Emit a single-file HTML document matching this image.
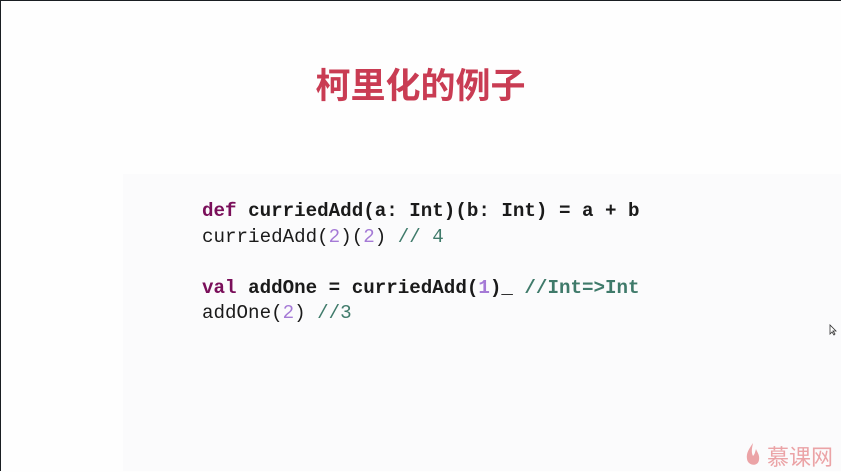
<!DOCTYPE html>
<html><head><meta charset="utf-8"><style>
html,body{margin:0;padding:0;}
body{width:841px;height:471px;overflow:hidden;background:#fefefe;position:relative;font-family:"Liberation Sans","Noto Sans CJK SC",sans-serif;}
.tb{position:absolute;left:0;top:0;width:841px;height:1px;background:#1a1e22;}
.lb{position:absolute;left:0;top:0;width:1px;height:471px;background:#1a1e22;}
.box{position:absolute;left:123px;top:174px;width:718px;height:297px;background:#fbfbfc;}
h1{position:absolute;left:0;width:841px;top:62px;margin:0;text-align:center;font-size:35px;font-weight:bold;color:#c93c53;font-family:"Noto Sans CJK SC",sans-serif;line-height:44px;}
pre{position:absolute;left:202px;top:199px;margin:0;font-family:"Liberation Mono",monospace;font-size:19.2px;line-height:25.5px;color:#1a1a1a;}
.k{color:#7a0f5a;font-weight:bold}.b{font-weight:bold}.n{color:#a57ad6}.c{color:#3f7a6a}.cb{color:#3f7a6a;font-weight:bold}
.logo{position:absolute;left:767px;top:444px;font-size:22px;color:#eba3a6;font-family:"Noto Sans CJK SC",sans-serif;line-height:24px;}
</style></head><body>
<div class="tb"></div><div class="lb"></div>
<div class="box"></div>
<h1>柯里化的例子</h1>
<pre><span class="k">def</span> <span class="b">curriedAdd(a: Int)(b: Int) = a + b</span>
curriedAdd(<span class="n">2</span>)(<span class="n">2</span>) <span class="c">// 4</span>

<span class="k">val</span> <span class="b">addOne = curriedAdd(<span class="n">1</span>)_</span> <span class="cb">//Int=&gt;Int</span>
addOne(<span class="n">2</span>) <span class="c">//3</span></pre>
<svg style="position:absolute;left:829px;top:324px" width="8" height="12"><path d="M1 1 L1 10 L3 8 L5 11 L6 10 L4 7 L7 7 Z" fill="#fff" stroke="#333" stroke-width="0.8"/></svg>
<svg style="position:absolute;left:745px;top:442px" width="16" height="26"><path d="M8 1 C4 7 1 11 2 17 C3 24 13 25 14 18 C15 13 12 10 11 7 C10 10 10 12 8 14 C6 10 7 6 8 1 Z" fill="#eba3a6"/></svg>
<div class="logo">慕课网</div>
</body></html>
